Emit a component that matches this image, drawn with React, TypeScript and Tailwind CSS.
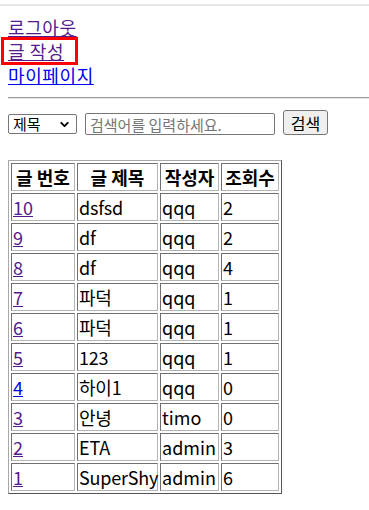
import { ChevronDown } from "lucide-react";

interface Post {
  no: number;
  title: string;
  writer: string;
  views: number;
  visited: boolean;
}

const posts: Post[] = [
  { no: 10, title: "dsfsd", writer: "qqq", views: 2, visited: true },
  { no: 9, title: "df", writer: "qqq", views: 2, visited: true },
  { no: 8, title: "df", writer: "qqq", views: 4, visited: true },
  { no: 7, title: "파덕", writer: "qqq", views: 1, visited: true },
  { no: 6, title: "파덕", writer: "qqq", views: 1, visited: true },
  { no: 5, title: "123", writer: "qqq", views: 1, visited: true },
  { no: 4, title: "하이1", writer: "qqq", views: 0, visited: false },
  { no: 3, title: "안녕", writer: "timo", views: 0, visited: true },
  { no: 2, title: "ETA", writer: "admin", views: 3, visited: true },
  { no: 1, title: "SuperShy", writer: "admin", views: 6, visited: true },
];

const cell = "border border-t-[#6f6f6f] border-l-[#6f6f6f] border-b-[#b4b4b4] border-r-[#b4b4b4] p-[1px] h-[28px] align-middle";

const App = () => {
  return (
    <div className="relative min-h-[510px] bg-white text-black font-['Noto_Sans_CJK_KR',sans-serif] text-[18px] leading-[24px]">
      <div className="pt-1">
        <div className="h-[2px] bg-[#e6e6e6]" />
      </div>

      <nav className="mt-[9px] ml-2 flex flex-col items-start text-[18px]">
        <a href="#logout" className="text-[#551a8b] underline tracking-[0.6px]">로그아웃</a>
        <a href="#write" className="text-[#551a8b] underline tracking-[0.6px]">글 작성</a>
        <a href="#mypage" className="text-[#0000ee] underline tracking-[0.6px]">마이페이지</a>
      </nav>

      {/* highlight box */}
      <div className="absolute left-[1px] top-[37px] w-[77px] h-[28px] border-[3px] border-[#ff0000]" />

      <div className="mt-[10px] ml-2 border-t border-t-[#9a9a9a] border-b border-b-[#e8e8e8]" />

      <form className="mt-[11px] ml-2 flex items-end gap-2 text-[15px] leading-[18px]">
        <div className="relative mb-[1px]">
          <select className="appearance-none w-[69px] h-[20px] pl-[4px] border border-[#767676] rounded-[2px] bg-white text-black">
            <option>제목</option>
            <option>작성자</option>
          </select>
          <ChevronDown size={13} strokeWidth={3.5} className="absolute right-[6px] top-[4px] pointer-events-none" />
        </div>
        <input
          type="text"
          placeholder="검색어를 입력하세요."
          className="w-[190px] h-[22px] px-[4px] border border-[#767676] rounded-[2px] placeholder:text-[#757575]"
        />
        <button type="button" className="w-[45px] h-[25px] border border-[#767676] rounded-[3px] bg-[#efefef] text-[16px]">
          검색
        </button>
      </form>

      <table className="mt-[25px] ml-2 table-fixed w-[274px] border-separate border-spacing-[2px] border border-t-[#a8a8a8] border-l-[#a8a8a8] border-b-[#555555] border-r-[#555555]">
        <colgroup>
          <col className="w-[64px]" />
          <col className="w-[81px]" />
          <col className="w-[59px]" />
          <col className="w-[58px]" />
        </colgroup>
        <thead>
          <tr>
            <th className={`${cell} font-bold text-center whitespace-nowrap`}>글 번호</th>
            <th className={`${cell} font-bold text-center whitespace-nowrap`}>글 제목</th>
            <th className={`${cell} font-bold text-center whitespace-nowrap`}>작성자</th>
            <th className={`${cell} font-bold text-center whitespace-nowrap`}>조회수</th>
          </tr>
        </thead>
        <tbody>
          {posts.map((item) => (
            <tr key={item.no}>
              <td className={cell}>
                <a href={`#post-${item.no}`} className={item.visited ? "text-[#551a8b] underline" : "text-[#0000ee] underline"}>
                  {item.no}
                </a>
              </td>
              <td className={`${cell} whitespace-nowrap tracking-[-0.2px]`}>{item.title}</td>
              <td className={`${cell} whitespace-nowrap`}>{item.writer}</td>
              <td className={cell}>{item.views}</td>
            </tr>
          ))}
        </tbody>
      </table>
    </div>
  );
};

export default App;
